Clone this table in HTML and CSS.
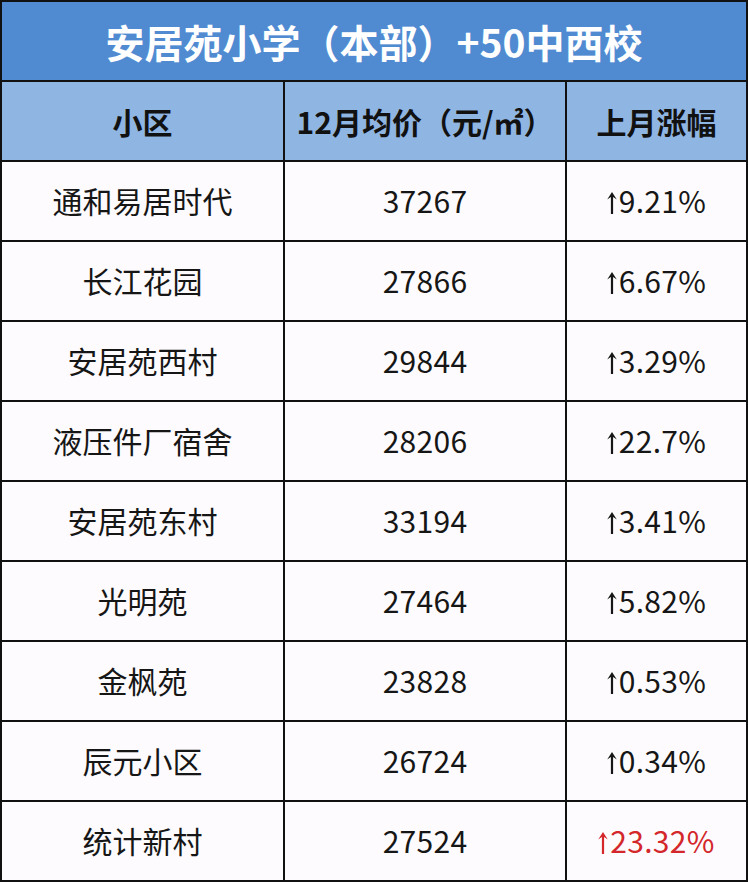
FILE: index.html
```html
<!DOCTYPE html>
<html lang="zh-CN">
<head>
<meta charset="utf-8">
<title>安居苑小学（本部）+50中西校</title>
<link rel="stylesheet" href="styles.css">
</head>
<body>
<div class="table">
  <div class="title">安居苑小学（本部）+50中西校</div>
  <div class="head">小区</div>
  <div class="head">12月均价（元/㎡）</div>
  <div class="head">上月涨幅</div>

  <div class="cell">通和易居时代</div><div class="cell num">37267</div><div class="cell num"><span><svg class="arr" viewBox="0 0 10 22"><path d="M5 0 L9.8 7.4 L6.1 5 L6.1 22 L3.9 22 L3.9 5 L0.2 7.4 Z"/></svg>9.21%</span></div>
  <div class="cell">长江花园</div><div class="cell num">27866</div><div class="cell num"><span><svg class="arr" viewBox="0 0 10 22"><path d="M5 0 L9.8 7.4 L6.1 5 L6.1 22 L3.9 22 L3.9 5 L0.2 7.4 Z"/></svg>6.67%</span></div>
  <div class="cell">安居苑西村</div><div class="cell num">29844</div><div class="cell num"><span><svg class="arr" viewBox="0 0 10 22"><path d="M5 0 L9.8 7.4 L6.1 5 L6.1 22 L3.9 22 L3.9 5 L0.2 7.4 Z"/></svg>3.29%</span></div>
  <div class="cell">液压件厂宿舍</div><div class="cell num">28206</div><div class="cell num"><span><svg class="arr" viewBox="0 0 10 22"><path d="M5 0 L9.8 7.4 L6.1 5 L6.1 22 L3.9 22 L3.9 5 L0.2 7.4 Z"/></svg>22.7%</span></div>
  <div class="cell">安居苑东村</div><div class="cell num">33194</div><div class="cell num"><span><svg class="arr" viewBox="0 0 10 22"><path d="M5 0 L9.8 7.4 L6.1 5 L6.1 22 L3.9 22 L3.9 5 L0.2 7.4 Z"/></svg>3.41%</span></div>
  <div class="cell">光明苑</div><div class="cell num">27464</div><div class="cell num"><span><svg class="arr" viewBox="0 0 10 22"><path d="M5 0 L9.8 7.4 L6.1 5 L6.1 22 L3.9 22 L3.9 5 L0.2 7.4 Z"/></svg>5.82%</span></div>
  <div class="cell">金枫苑</div><div class="cell num">23828</div><div class="cell num"><span><svg class="arr" viewBox="0 0 10 22"><path d="M5 0 L9.8 7.4 L6.1 5 L6.1 22 L3.9 22 L3.9 5 L0.2 7.4 Z"/></svg>0.53%</span></div>
  <div class="cell">辰元小区</div><div class="cell num">26724</div><div class="cell num"><span><svg class="arr" viewBox="0 0 10 22"><path d="M5 0 L9.8 7.4 L6.1 5 L6.1 22 L3.9 22 L3.9 5 L0.2 7.4 Z"/></svg>0.34%</span></div>
  <div class="cell">统计新村</div><div class="cell num">27524</div><div class="cell num red"><span><svg class="arr" viewBox="0 0 10 22"><path d="M5 0 L9.8 7.4 L6.1 5 L6.1 22 L3.9 22 L3.9 5 L0.2 7.4 Z"/></svg>23.32%</span></div>
</div>
</body>
</html>
```

FILE: styles.css
```css
html, body {
  margin: 0;
  padding: 0;
  background: #fdfbfd;
}

.table {
  width: 748px;
  box-sizing: border-box;
  padding: 2px;
  background: #111;
  display: grid;
  grid-template-columns: 281px 280px 179px;
  grid-auto-rows: 78px;
  gap: 2px;
  font-family: "Noto Sans CJK SC", "Liberation Sans", sans-serif;
}

.title {
  grid-column: 1 / 4;
  background: #508bd2;
  color: #fff;
  font-size: 39px;
  font-weight: 700;
  display: flex;
  align-items: center;
  justify-content: center;
}

.head {
  background: #8fb5e3;
  color: #111;
  font-size: 30px;
  font-weight: 700;
  display: flex;
  align-items: center;
  justify-content: center;
}

.cell {
  background: #fdfbfd;
  color: #161616;
  font-size: 30px;
  font-weight: 400;
  display: flex;
  align-items: center;
  justify-content: center;
  padding-bottom: 3px;
  box-sizing: border-box;
}

.num {
  letter-spacing: 0.3px;
}

.arr {
  width: 10px;
  height: 22px;
  margin-right: 2px;
  vertical-align: -1px;
  fill: currentColor;
}

.red {
  color: #d3272b;
}
```
